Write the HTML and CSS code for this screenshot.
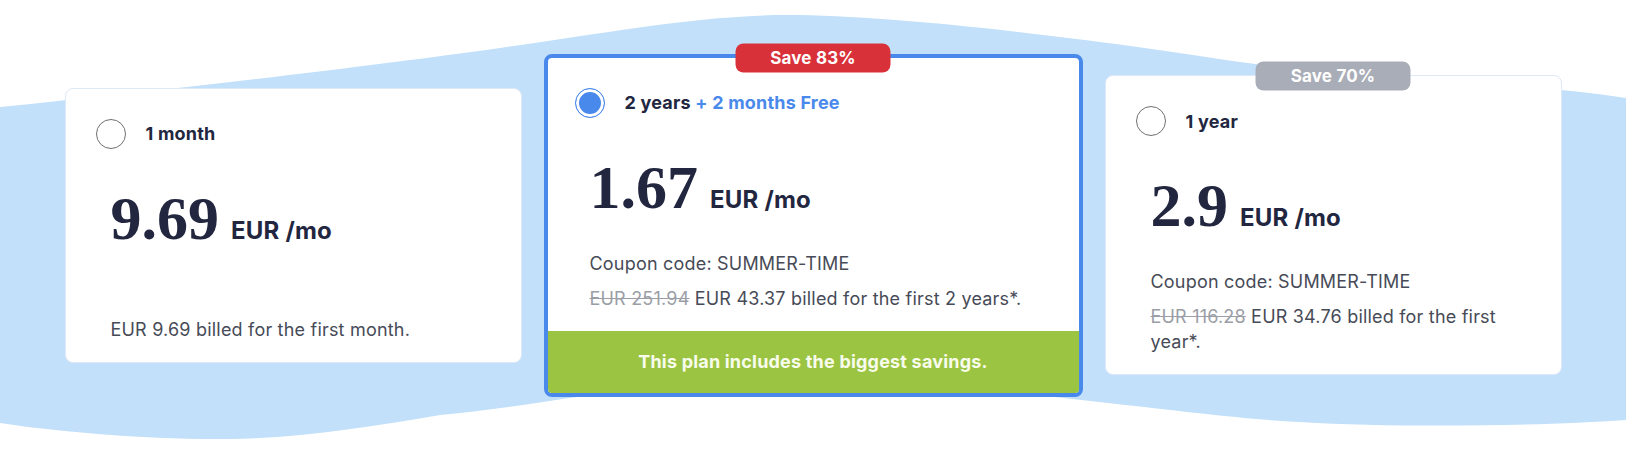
FILE: index.html
```html
<!DOCTYPE html>
<html lang="en">
<head>
  <meta charset="UTF-8">
  <title>Choose your plan</title>
  <meta name="viewport" content="width=device-width, initial-scale=1">
  <link rel="stylesheet" href="styles.css">
</head>
<body>
  <section class="pricing">
    <!-- background wave -->
    <svg class="wave" viewBox="0 0 1626 450" preserveAspectRatio="none" aria-hidden="true">
      <path d="M0,107 C170,90 380,65 500,48 C600,34 700,15 787,15 C900,15 1100,40 1240,62 C1330,74 1500,80 1626,98 L1626,420 C1540,426 1400,428 1300,422 C1200,418 950,378 800,378 C650,378 560,404 440,415 C370,427 300,438 230,439 C150,440 60,432 0,423 Z"/>
    </svg>

    <div class="plans">
      <div class="plan">
        <div class="plan-head">
          <span class="radio"></span>
          <span class="plan-name">1 month</span>
        </div>
        <div class="plan-body">
          <div class="price">
            <span class="price-value">9.69</span>
            <span class="price-unit">EUR /mo</span>
          </div>
          <p class="coupon"></p>
          <p class="billed">EUR 9.69 billed for the first month.</p>
        </div>
      </div>

      <div class="plan plan--best">
        <span class="badge badge--red">Save 83%</span>
        <div class="plan-head">
          <span class="radio is-checked"></span>
          <span class="plan-name">2 years <span class="plan-extra">+ 2 months Free</span></span>
        </div>
        <div class="plan-body">
          <div class="price">
            <span class="price-value">1.67</span>
            <span class="price-unit">EUR /mo</span>
          </div>
          <p class="coupon">Coupon code: SUMMER-TIME</p>
          <p class="billed"><s class="old-price">EUR 251.94</s> EUR 43.37 billed for the first 2 years*.</p>
        </div>
        <div class="plan-perk">This plan includes the biggest savings.</div>
      </div>

      <div class="plan">
        <span class="badge badge--grey">Save 70%</span>
        <div class="plan-head">
          <span class="radio"></span>
          <span class="plan-name">1 year</span>
        </div>
        <div class="plan-body">
          <div class="price">
            <span class="price-value">2.9</span>
            <span class="price-unit">EUR /mo</span>
          </div>
          <p class="coupon">Coupon code: SUMMER-TIME</p>
          <p class="billed"><s class="old-price">EUR 116.28</s> EUR 34.76 billed for the first year*.</p>
        </div>
      </div>
    </div>
  </section>
</body>
</html>
```

FILE: styles.css
```css
:root {
  --navy: #22263f;
  --text: #474b57;
  --muted: #9b9ea6;
  --blue: #4a89ec;
  --wave: #c2e0fa;
  --green: #9cc443;
  --red: #d8313a;
  --grey: #a9adb7;
}
* { margin: 0; padding: 0; box-sizing: border-box; }
body {
  font-family: 'Inter', 'Open Sans', sans-serif;
  letter-spacing: 0.2px;
  color: var(--text);
  background: #fff;
}
.pricing {
  position: relative;
  height: 450px;
  display: flex;
  align-items: center;
  justify-content: center;
}
.wave {
  position: absolute;
  top: 0;
  left: 0;
  width: 100%;
  height: 100%;
  fill: var(--wave);
}
.plans {
  position: relative;
  display: grid;
  grid-template-columns: 457px 539px 457px;
  gap: 22px;
  align-items: center;
}
.plan {
  position: relative;
  background: #fff;
  border: 1px solid #dde9f7;
  border-radius: 8px;
  padding: 30px 30px 20px;
}
.plan--best {
  border: 4px solid var(--blue);
  padding: 30px 27px 0;
}
.badge {
  position: absolute;
  top: 0;
  left: 50%;
  transform: translate(-50%, -50%);
  min-width: 155px;
  height: 29px;
  line-height: 29px;
  padding: 0 20px;
  border-radius: 8px;
  color: #fff;
  font-size: 17px;
  font-weight: 700;
  text-align: center;
}
.badge--red { background: var(--red); }
.badge--grey { background: var(--grey); }
.plan-head {
  display: flex;
  align-items: center;
  gap: 20px;
}
.radio {
  width: 30px;
  height: 30px;
  border: 1px solid #707070;
  border-radius: 50%;
  flex-shrink: 0;
}
.radio.is-checked {
  border-color: var(--blue);
  background: var(--blue);
  box-shadow: inset 0 0 0 3px #fff;
}
.plan-name {
  font-size: 18px;
  font-weight: 700;
  color: var(--navy);
}
.plan-extra {
  color: var(--blue);
}
.plan-body {
  padding: 0 15px;
}
.price {
  display: flex;
  align-items: baseline;
  gap: 12px;
  margin-top: 38px;
  color: var(--navy);
}
.price-value {
  font-family: 'Liberation Serif', serif;
  font-variant-numeric: oldstyle-nums;
  font-size: 62px;
  font-weight: 700;
  letter-spacing: 0;
  line-height: 1;
}
.price-unit {
  font-size: 24px;
  font-weight: 700;
}
.plan-body p {
  font-size: 18px;
  line-height: 25px;
}
.coupon {
  margin-top: 33px;
  min-height: 25px;
}
.billed {
  margin-top: 10px;
}
.old-price {
  color: var(--muted);
}
.plan-perk {
  margin: 20px -27px 0;
  height: 62px;
  display: flex;
  align-items: center;
  justify-content: center;
  background: var(--green);
  border-radius: 0 0 4px 4px;
  color: #f8fcec;
  font-size: 18px;
  font-weight: 700;
}
```
